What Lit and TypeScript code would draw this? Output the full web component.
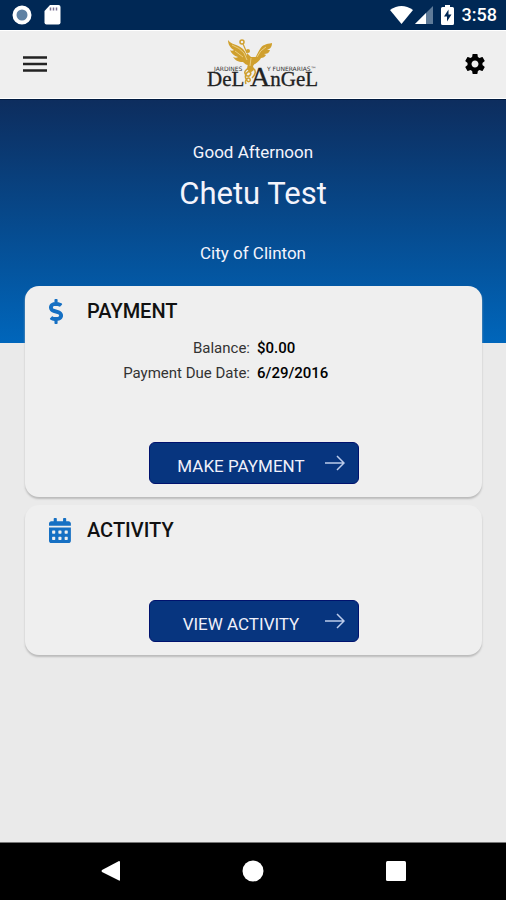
import { LitElement, html, css, svg } from "lit";
import { customElement, property } from "lit/decorators.js";

const dollar = svg`<path d="M209.200 233.400l-108-31.600C88.700 198.200 80 186.500 80 173.500c0-16.300 13.200-29.500 29.500-29.500h66.300c12.200 0 24.200 3.700 34.200 10.500 6.100 4.100 14.300 3.100 19.500-2l34.800-34c7.100-6.900 6.100-18.400-1.800-24.500C238 74.800 207.400 64.100 176 64V16c0-8.800-7.200-16-16-16h-32c-8.800 0-16 7.200-16 16v48h-2.500C45.800 64-5.400 118.700.5 183.600c4.200 46.100 39.400 83.600 83.800 96.600l102.500 30c12.500 3.700 21.200 15.300 21.200 28.300 0 16.300-13.200 29.500-29.500 29.500h-66.300C100 368 88 364.300 78 357.500c-6.100-4.100-14.300-3.100-19.500 2l-34.800 34c-7.100 6.900-6.100 18.400 1.800 24.500 24.500 19.200 55.100 29.900 86.500 30v48c0 8.800 7.200 16 16 16h32c8.800 0 16-7.200 16-16v-48.200c46.600-.9 90.300-28.600 105.700-72.700 21.500-61.600-14.600-124.800-72.500-141.700z"/>`;

const calendar = svg`<path d="M0 464c0 26.500 21.500 48 48 48h352c26.500 0 48-21.500 48-48V192H0v272zm320-196c0-6.600 5.400-12 12-12h40c6.600 0 12 5.400 12 12v40c0 6.600-5.400 12-12 12h-40c-6.600 0-12-5.400-12-12v-40zm0 128c0-6.600 5.400-12 12-12h40c6.600 0 12 5.400 12 12v40c0 6.600-5.400 12-12 12h-40c-6.600 0-12-5.400-12-12v-40zM192 268c0-6.600 5.400-12 12-12h40c6.600 0 12 5.400 12 12v40c0 6.600-5.400 12-12 12h-40c-6.600 0-12-5.400-12-12v-40zm0 128c0-6.600 5.400-12 12-12h40c6.600 0 12 5.400 12 12v40c0 6.600-5.400 12-12 12h-40c-6.600 0-12-5.400-12-12v-40zM64 268c0-6.600 5.400-12 12-12h40c6.600 0 12 5.400 12 12v40c0 6.600-5.400 12-12 12H76c-6.600 0-12-5.400-12-12v-40zm0 128c0-6.600 5.400-12 12-12h40c6.600 0 12 5.400 12 12v40c0 6.600-5.400 12-12 12H76c-6.600 0-12-5.400-12-12v-40zM400 64h-48V16c0-8.800-7.200-16-16-16h-32c-8.800 0-16 7.200-16 16v48H160V16c0-8.800-7.200-16-16-16h-32c-8.800 0-16 7.200-16 16v48H48C21.500 64 0 85.500 0 112v48h448v-48c0-26.500-21.500-48-48-48z"/>`;

@customElement("status-bar")
class StatusBar extends LitElement {
  static styles = css`
    :host {
      display: flex;
      align-items: center;
      justify-content: space-between;
      height: 30px;
      padding: 0 9px 0 12px;
      background: #002855;
      color: #fff;
      font-size: 18px;
      font-weight: 500;
      line-height: 24px;
    }
    .group {
      display: flex;
      align-items: center;
      gap: 12px;
    }
    .signals {
      display: flex;
      align-items: center;
      gap: 1px;
    }
    .right {
      gap: 8px;
    }
    svg {
      display: block;
    }
  `;

  render() {
    return html`
      <div class="group">
        <svg width="20" height="20" viewBox="0 0 20 20" aria-hidden="true">
          <circle cx="10" cy="10" r="7.500" fill="#5f81a3" stroke="#fff" stroke-width="4" />
        </svg>
        <svg width="17" height="20" viewBox="0 0 17 20" aria-hidden="true">
          <path fill="#fff" d="M6 0h8.500a2 2 0 0 1 2 2v15.500a2 2 0 0 1-2 2h-12a2 2 0 0 1-2-2V6z" />
          <path stroke="#7b7191" stroke-width="1.500" d="M6.500 2.500v3M9.500 2.500v3M12.500 2.500v3" />
        </svg>
      </div>
      <div class="group right">
        <div class="signals">
          <svg width="23" height="20" viewBox="0 0 23 20" aria-hidden="true">
            <path fill="#fff" d="M0 5Q11.500-3 23 5L11.500 19z" />
          </svg>
          <svg width="19" height="20" viewBox="0 0 19 20" aria-hidden="true">
            <path fill="#5f7b99" d="M19 1v18H1z" />
            <path fill="#fff" d="M12 8v11H1z" />
          </svg>
        </div>
        <svg width="13" height="20" viewBox="0 0 13 20" aria-hidden="true">
          <path fill="#fff" d="M4 0h5v2h2.500a1.500 1.500 0 0 1 1.500 1.500v15a1.500 1.500 0 0 1-1.500 1.500h-10A1.500 1.500 0 0 1 0 18.500v-15A1.500 1.500 0 0 1 1.500 2H4z" />
          <path fill="#002855" d="M7.500 4.500L3 11.500h3v5l4.500-7h-3z" />
        </svg>
        <span>3:58</span>
      </div>
    `;
  }
}

@customElement("app-header")
class AppHeader extends LitElement {
  static styles = css`
    :host {
      display: flex;
      align-items: center;
      justify-content: space-between;
      box-sizing: border-box;
      height: 69px;
      padding: 0 12px 1px;
      background: #efefef;
      border-top: 1px solid #fff;
      border-bottom: 1px solid #fff;
    }
    button {
      display: grid;
      place-items: center;
      width: 46px;
      height: 46px;
      padding: 0;
      border: 0;
      background: none;
    }
    .settings {
      width: 38px;
    }
    .logo {
      display: block;
      margin-left: 12px;
    }
    .name {
      font-family: "Liberation Serif", serif;
      font-size: 21px;
      fill: #222;
      stroke: #222;
      stroke-width: 0.3px;
    }
    .initial {
      font-size: 28px;
    }
    .tagline {
      font-family: "DejaVu Sans", sans-serif;
      font-size: 6px;
      fill: #333;
    }
  `;

  render() {
    return html`
      <button aria-label="Menu">
        <svg width="24" height="18" viewBox="0 0 24 18">
          <path stroke="#222" stroke-width="2.500" d="M0 2.500h24M0 9h24M0 15.500h24" />
        </svg>
      </button>
      <svg class="logo" width="112" height="54" viewBox="0 0 112 54" role="img" aria-label="Jardines y Funerarias Del Angel">
        <g fill="#d0a02e">
          <path d="M21 3C24 8 31 7 36 12c3 3 4 7 5 11l3 3-3 2c-2 0-3-1-5-3-5 0-8-2-10-5 2 1 4 1 5 0-4-1-7-4-8-7 1 1 3 1 4 0-4-2-6-6-6-10z" />
          <path d="M65 6c-6 1-10 2-12 6-2 3-3 6-5 9l-3 4 3 2c3-2 5-4 6-6 2 0 4-1 5-3l-2-1c3 0 5-1 6-4h-3c3-1 5-3 5-7z" />
          <circle cx="41" cy="14" r="2" />
          <path d="M40 16l4 4 5 0 1 4-4 5 1 4-4 3-3-4 1-6-2-5z" />
        </g>
        <g fill="none" stroke="#d0a02e">
          <circle cx="35" cy="5" r="2" stroke-width="1.500" />
          <path stroke-width="1.200" d="M36 7l4 9" />
          <path stroke-width="1.500" d="M44 30c-5 2-8 5-5 8s6-1 4-3-6 3-4 7 5 3 4 0-6 1-4 5M46 31c4 3 2 7-1 10" />
        </g>
        <path d="M25 8q8 3 12 8l3 7M28 14l8 6M59 10q-6 3-9 10M44 21l-1 8" fill="none" stroke="#f0d894" stroke-width=".8" />
        <text class="tagline" x="7" y="34">JARDINES</text>
        <text class="tagline" x="60" y="34">Y FUNERARIAS™</text>
        <text class="name" x="0" y="49">DeL</text>
        <text class="name" x="43" y="49"><tspan class="initial">A</tspan>nGeL</text>
      </svg>
      <button class="settings" aria-label="Settings">
        <svg width="24" height="24" viewBox="0 0 24 24">
          <path d="M19.430 12.980c.04-.32.070-.64.070-.98s-.03-.66-.07-.98l2.110-1.650c.19-.15.240-.42.120-.64l-2-3.460c-.12-.22-.39-.3-.61-.22l-2.490 1c-.52-.4-1.080-.73-1.690-.98l-.38-2.650C14.460 2.180 14.250 2 14 2h-4c-.25 0-.46.180-.49.420l-.38 2.650c-.61.250-1.170.590-1.690.98l-2.490-1c-.23-.09-.49 0-.61.220l-2 3.460c-.13.220-.07.490.120.640l2.110 1.650c-.04.320-.07.650-.07.980s.03.660.070.980l-2.110 1.650c-.19.150-.24.420-.12.640l2 3.460c.12.220.39.300.61.220l2.490-1c.52.400 1.080.730 1.690.980l.38 2.650c.03.240.24.420.49.420h4c.25 0 .46-.18.490-.42l.38-2.650c.61-.25 1.170-.59 1.690-.98l2.490 1c.23.090.49 0 .61-.22l2-3.460c.12-.22.070-.49-.12-.64l-2.110-1.650zM12 15.500c-1.930 0-3.500-1.570-3.500-3.500s1.570-3.500 3.500-3.500 3.500 1.570 3.500 3.500-1.570 3.500-3.500 3.500z" />
        </svg>
      </button>
    `;
  }
}

@customElement("action-card")
class ActionCard extends LitElement {
  @property() heading = "";
  @property() action = "";
  @property() icon: "dollar" | "calendar" = "dollar";

  static styles = css`
    :host {
      display: flex;
      flex-direction: column;
      padding: 12px 24px 13px;
      border-radius: 14px;
      background: #efefef;
      box-shadow: 0 2px 2px #bbb;
    }
    header {
      display: grid;
      grid-template-columns: 38px 1fr;
      align-items: center;
    }
    .icon {
      display: block;
      height: 25px;
      fill: #1670c3;
    }
    h2 {
      margin: 0;
      font-size: 20px;
      font-weight: 500;
      line-height: 26px;
      color: #111;
    }
    .body {
      flex: 1;
    }
    button {
      display: grid;
      grid-template-columns: 1fr 20px;
      align-items: center;
      align-self: center;
      width: 210px;
      height: 42px;
      padding: 0 13px 0 8px;
      border: 1px solid #00126e;
      border-radius: 6px;
      background: #07357f;
      color: #f0f0fa;
      font: 400 17px/24px Roboto, sans-serif;
    }
    .label {
      padding-top: 6px;
    }
  `;

  render() {
    const money = this.icon === "dollar";
    return html`
      <header>
        <svg class="icon" viewBox=${money ? "0 0 288 512" : "0 0 448 512"} aria-hidden="true">
          ${money ? dollar : calendar}
        </svg>
        <h2>${this.heading}</h2>
      </header>
      <div class="body"><slot></slot></div>
      <button>
        <span class="label">${this.action}</span>
        <svg width="20" height="16" viewBox="0 0 20 16" aria-hidden="true">
          <path fill="none" stroke="#bccbea" stroke-width="1.500" d="M0 8h19M12 1l7 7-7 7" />
        </svg>
      </button>
    `;
  }
}

@customElement("nav-bar")
class NavBar extends LitElement {
  static styles = css`
    :host {
      display: flex;
      align-items: center;
      justify-content: center;
      gap: 95px;
      box-sizing: border-box;
      height: 58px;
      padding-bottom: 1px;
      background: #000;
      border-top: 1px solid #777;
    }
    button {
      display: grid;
      place-items: center;
      width: 48px;
      height: 48px;
      padding: 0;
      border: 0;
      background: none;
    }
    svg {
      fill: #fff;
    }
  `;

  render() {
    return html`
      <button aria-label="Back">
        <svg width="22" height="22" viewBox="0 0 22 22"><path d="M20 1q1 0 1 1v18q0 1-1 .5L3 12q-1-1 0-2z" /></svg>
      </button>
      <button aria-label="Home">
        <svg width="22" height="22" viewBox="0 0 22 22"><circle cx="11" cy="11" r="10.500" /></svg>
      </button>
      <button aria-label="Overview">
        <svg width="22" height="22" viewBox="0 0 22 22"><rect x="1" y="1" width="20" height="20" rx="1.500" /></svg>
      </button>
    `;
  }
}

@customElement("app-root")
class AppRoot extends LitElement {
  static styles = css`
    :host {
      display: flex;
      flex-direction: column;
      min-height: 100vh;
      background: #eaeaea;
      font-family: Roboto, sans-serif;
    }
    .hero {
      padding: 40px 24px 78px;
      border-top: 1px solid #001a40;
      background: linear-gradient(#0d2d5e, #0066bb);
      color: #f4f4fc;
      text-align: center;
    }
    p,
    h1 {
      margin: 0;
      font-weight: 400;
    }
    p {
      font-size: 17px;
      line-height: 24px;
    }
    h1 {
      padding: 8px 0 25px;
      font-size: 31px;
      line-height: 44px;
    }
    main {
      display: flex;
      flex: 1;
      flex-direction: column;
      gap: 8px;
      margin-top: -57px;
      padding: 0 24px 24px 25px;
    }
    .payment {
      min-height: 186px;
    }
    .activity {
      min-height: 125px;
    }
    dl {
      display: grid;
      grid-template-columns: 201px 1fr;
      column-gap: 7px;
      margin: 12px 0 0;
      font-size: 15px;
      line-height: 25px;
      color: #333;
    }
    dt {
      text-align: right;
    }
    dd {
      margin: 0;
      font-weight: 500;
      color: #000;
    }
  `;

  render() {
    return html`
      <status-bar></status-bar>
      <app-header></app-header>
      <section class="hero">
        <p>Good Afternoon</p>
        <h1>Chetu Test</h1>
        <p>City of Clinton</p>
      </section>
      <main>
        <action-card class="payment" heading="PAYMENT" icon="dollar" action="MAKE PAYMENT">
          <dl>
            <dt>Balance:</dt>
            <dd>$0.00</dd>
            <dt>Payment Due Date:</dt>
            <dd>6/29/2016</dd>
          </dl>
        </action-card>
        <action-card class="activity" heading="ACTIVITY" icon="calendar" action="VIEW ACTIVITY"></action-card>
      </main>
      <nav-bar></nav-bar>
    `;
  }
}
